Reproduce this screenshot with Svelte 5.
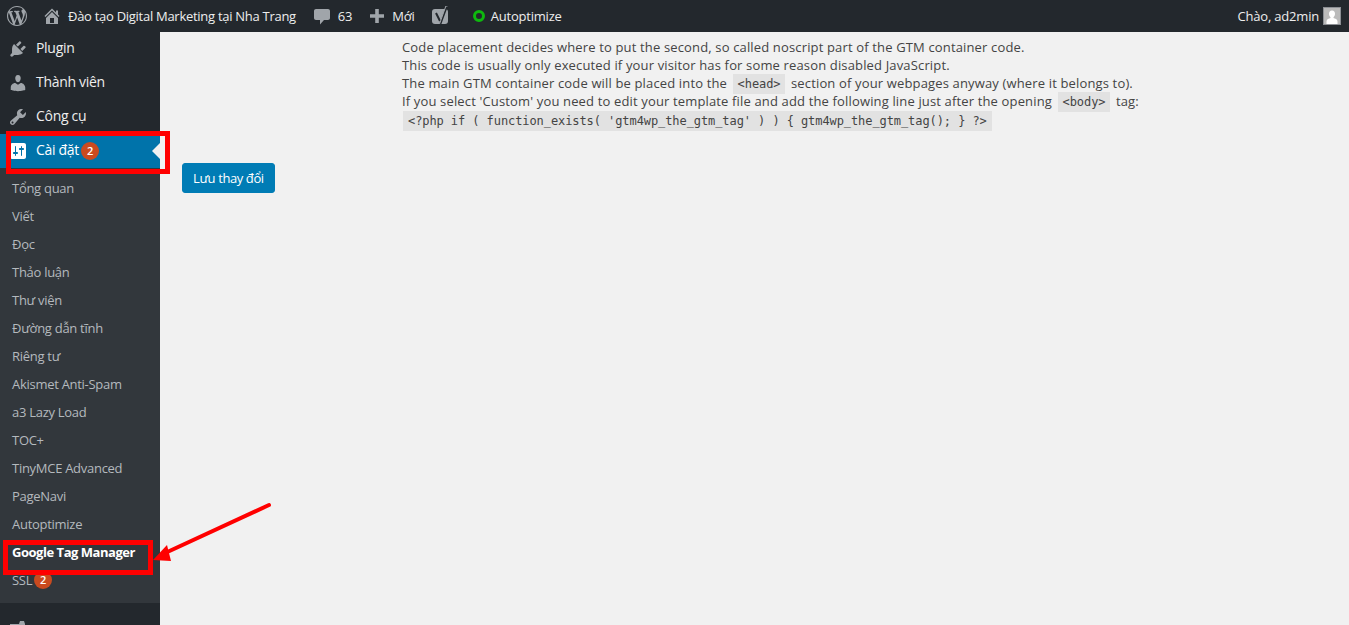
<script lang="ts">
  const settingsLinks = [
    { label: "Tổng quan" },
    { label: "Viết" },
    { label: "Đọc" },
    { label: "Thảo luận" },
    { label: "Thư viện" },
    { label: "Đường dẫn tĩnh" },
    { label: "Riêng tư" },
    { label: "Akismet Anti-Spam" },
    { label: "a3 Lazy Load" },
    { label: "TOC+" },
    { label: "TinyMCE Advanced" },
    { label: "PageNavi" },
    { label: "Autoptimize" },
    { label: "Google Tag Manager", current: true },
    { label: "SSL", badge: 2 },
  ];

  const mainLinks = [
    {
      label: "Plugin",
      icon: "M13.11 4.36L9.87 7.6 8 5.73l3.24-3.24c.35-.34 1.05-.2 1.56.32.52.51.66 1.21.31 1.55zm-8 1.77l.91-1.12 9.01 9.01-1.19.84c-.71.71-2.63 1.16-3.82 1.16H6.14L4.9 17.26c-.59.59-1.54.59-2.12 0-.59-.58-.59-1.53 0-2.12l1.24-1.24v-3.88c0-1.13.4-3.19 1.09-3.89zm7.26 3.97l3.24-3.24c.34-.35 1.04-.21 1.55.31.52.51.66 1.21.31 1.55l-3.24 3.25z",
    },
    {
      label: "Thành viên",
      icon: "M10 9.25c-2.27 0-2.73-3.44-2.73-3.44C7 4.02 7.82 2 9.97 2c2.16 0 2.98 2.02 2.71 3.81 0 0-.41 3.44-2.68 3.44zm0 2.57L12.72 10c2.39 0 4.52 2.33 4.52 4.53v2.49s-3.65 1.13-7.24 1.13c-3.65 0-7.24-1.13-7.24-1.13v-2.49c0-2.25 1.94-4.48 4.47-4.48z",
    },
    {
      label: "Công cụ",
      icon: "M16.68 9.77c-1.34 1.34-3.3 1.67-4.95.99l-5.41 6.52c-.99.99-2.59.99-3.58 0s-.99-2.59 0-3.57l6.52-5.42c-.68-1.65-.35-3.61.99-4.95 1.28-1.28 3.12-1.62 4.72-1.06l-2.89 2.89 2.82 2.82 2.86-2.87c.53 1.58.18 3.39-1.08 4.65zM3.81 16.21c.4.39 1.04.39 1.43 0 .4-.4.4-1.04 0-1.43-.39-.4-1.03-.4-1.43 0-.39.39-.39 1.03 0 1.43z",
    },
  ];

  const settingsIcon =
    "M18 16V4c0-1.1-.9-2-2-2H4c-1.1 0-2 .9-2 2v12c0 1.1.9 2 2 2h12c1.1 0 2-.9 2-2zM8 11h1c.55 0 1 .45 1 1s-.45 1-1 1H8v1.5c0 .28-.22.5-.5.5s-.5-.22-.5-.5V13H6c-.55 0-1-.45-1-1s.45-1 1-1h1V5.5c0-.28.22-.5.5-.5s.5.22.5.5V11zm5-2h-1c-.55 0-1-.45-1-1s.45-1 1-1h1V5.5c0-.28.22-.5.5-.5s.5.22.5.5V7h1c.55 0 1 .45 1 1s-.45 1-1 1h-1v5.5c0 .28-.22.5-.5.5s-.5-.22-.5-.5V9z";
</script>

<div class="page">
  <header class="adminbar">
    <div class="bar-left">
      <span class="bar-item wp">
        <svg viewBox="0 0 20 20" width="20" height="20"><path d="M20 10c0-5.51-4.49-10-10-10C4.48 0 0 4.49 0 10c0 5.52 4.48 10 10 10 5.51 0 10-4.48 10-10zM7.780 15.370L4.370 6.220c.55-.02 1.170-.08 1.170-.08.5-.06.44-1.130-.06-1.110 0 0-1.450.11-2.370.11-.18 0-.37 0-.58-.01C4.120 2.690 6.870 1.110 10 1.110c2.330 0 4.450.87 6.050 2.340-.68-.11-1.650.39-1.650 1.580 0 .74.45 1.360.9 2.100.35.61.55 1.360.55 2.460 0 1.490-1.400 5-1.400 5l-3.030-8.370c.54-.02.82-.17.82-.17.5-.05.44-1.250-.06-1.220 0 0-1.440.12-2.380.12-.87 0-2.330-.12-2.330-.12-.5-.03-.56 1.200-.06 1.220l.92.08 1.260 3.410zM17.410 10c.24-.64.74-1.870.43-4.250.7 1.290 1.050 2.710 1.050 4.250 0 3.290-1.730 6.240-4.400 7.780.97-2.590 1.940-5.200 2.920-7.780zM6.100 18.090C3.120 16.650 1.110 13.530 1.110 10c0-1.300.23-2.480.72-3.590C3.250 10.300 4.670 14.200 6.100 18.090zm4.030-6.630l2.580 6.980c-.86.29-1.760.45-2.710.45-.79 0-1.570-.11-2.290-.33.81-2.380 1.620-4.740 2.420-7.100z"/></svg>
      </span>
      <span class="bar-item site">
        <svg viewBox="0 0 20 20" width="20" height="20"><path d="M16 8.5l1.53 1.53-1.06 1.06L10 4.62l-6.47 6.47-1.06-1.06L10 2.5l4 4v-2h2v4zm-6-2.46l6 5.99V18H4v-5.97zM12 17v-5H8v5h4z"/></svg>
        Đào tạo Digital Marketing tại Nha Trang
      </span>
      <span class="bar-item comments">
        <svg viewBox="0 0 20 20" width="20" height="20"><path d="M4 3h12c1.100 0 2 .9 2 2v7c0 1.100-.9 2-2 2h-4l-4 4.500V14H4c-1.100 0-2-.9-2-2V5c0-1.100.9-2 2-2z"/></svg>
        63
      </span>
      <span class="bar-item new">
        <svg viewBox="0 0 20 20" width="20" height="20"><path d="M17 8.200v3.600h-5.200V17H8.200v-5.200H3V8.200h5.200V3h3.600v5.200H17z"/></svg>
        Mới
      </span>
      <span class="bar-item yoast">
        <svg viewBox="0 0 18 20" width="18" height="20">
          <rect x="0" y="3" width="16" height="15" rx="3"/>
          <path d="M4 7l4 8M15 0L8 19" fill="none" stroke="#23282d" stroke-width="2"/>
          <path d="M15.500 0l-1.600 0L7.500 18" fill="none" stroke="#a0a5aa" stroke-width="1"/>
        </svg>
      </span>
      <span class="bar-item ao">
        <span class="ao-dot"></span>
        Autoptimize
      </span>
    </div>
    <div class="bar-right">
      Chào, ad2min
      <span class="avatar">
        <svg viewBox="0 0 16 16" width="16" height="16"><rect width="16" height="16" fill="#bbb"/><path d="M8 2.500c2 0 3 1.400 3 3.300 0 1.500-.6 2.800-1.500 3.500v.7c1.500.4 4 1.200 4 3.500V16H2.500v-2.500c0-2.300 2.500-3.100 4-3.500v-.7C5.600 8.600 5 7.300 5 5.800c0-1.900 1-3.300 3-3.300z" fill="#fff"/></svg>
      </span>
    </div>
  </header>

  <div class="body">
    <nav class="sidebar">
      <ul class="menu">
        {#each mainLinks as link}
          <li class="menu-item">
            <svg viewBox="0 0 20 20" width="20" height="20"><path d={link.icon}/></svg>
            <span class="menu-label">{link.label}</span>
          </li>
        {/each}
        <li class="menu-item active">
          <svg viewBox="0 0 20 20" width="20" height="20"><path d={settingsIcon}/></svg>
          <span class="menu-label">Cài đặt</span>
          <span class="badge">2</span>
        </li>
      </ul>
      <ul class="submenu">
        {#each settingsLinks as link}
          <li class:current={link.current}>
            {link.label}
            {#if link.badge}<span class="badge">{link.badge}</span>{/if}
          </li>
        {/each}
      </ul>
      <div class="menu-item next">
        <svg viewBox="0 0 20 20" width="20" height="20"><path d="M2 7h9l1-3h4l1 3v10H2z"/></svg>
      </div>
    </nav>

    <main class="content">
      <div class="notes">
        <p>Code placement decides where to put the second, so called noscript part of the GTM container code.</p>
        <p>This code is usually only executed if your visitor has for some reason disabled JavaScript.</p>
        <p>The main GTM container code will be placed into the <code>&lt;head&gt;</code> section of your webpages anyway (where it belongs to).</p>
        <p>If you select 'Custom' you need to edit your template file and add the following line just after the opening <code>&lt;body&gt;</code> tag:</p>
        <p class="snippet"><code>&lt;?php if ( function_exists( 'gtm4wp_the_gtm_tag' ) ) &#123; gtm4wp_the_gtm_tag(); &#125; ?&gt;</code></p>
      </div>
      <button class="save" type="button">Lưu thay đổi</button>
    </main>
  </div>

  <!-- annotations drawn on top of the screenshot -->
  <div class="mark mark-settings"></div>
  <div class="mark mark-gtm"></div>
  <svg class="arrow" width="130" height="70" viewBox="0 0 130 70">
    <line x1="121" y1="5" x2="15" y2="54" stroke="#f00" stroke-width="4" stroke-linecap="round"/>
    <polygon points="5,60 19,45 23,61" fill="#f00"/>
  </svg>
</div>

<style>
  :global(body) {
    margin: 0;
    background: #f1f1f1;
  }

  .page {
    position: relative;
    height: 625px;
    overflow: hidden;
    font-family: "Open Sans", "Noto Sans", sans-serif;
    font-size: 13px;
    color: #444;
    background: #f1f1f1;
  }

  .adminbar {
    display: flex;
    justify-content: space-between;
    align-items: center;
    height: 32px;
    padding: 0 8px 0 7px;
    background: #23282d;
    color: #eee;
    letter-spacing: -0.2px;
  }

  .bar-left,
  .bar-right,
  .bar-item {
    display: flex;
    align-items: center;
  }

  .adminbar svg {
    fill: #a0a5aa;
  }

  .bar-item.wp {
    margin-right: 15px;
  }

  .site {
    letter-spacing: -0.28px;
  }

  .site svg {
    margin-right: 6px;
  }

  .comments {
    margin-left: 16px;
  }

  .comments svg {
    margin-right: 6px;
  }

  .new {
    margin-left: 15px;
  }

  .new svg {
    margin-right: 5px;
  }

  .yoast {
    margin-left: 17px;
  }

  .ao {
    margin-left: 23px;
  }

  .ao-dot {
    width: 6px;
    height: 6px;
    margin-right: 6px;
    border: 3px solid #0eb90e;
    border-radius: 50%;
  }

  .avatar {
    display: flex;
    margin-left: 4px;
    border: 1px solid #8c8f94;
  }

  .body {
    display: flex;
    height: 593px;
  }

  .sidebar {
    flex: 0 0 160px;
    background: #23282d;
    color: #eee;
  }

  .menu,
  .submenu {
    margin: 0;
    padding: 0;
    list-style: none;
  }

  .menu-item {
    position: relative;
    display: flex;
    align-items: center;
    height: 34px;
    padding-left: 8px;
    font-size: 14px;
    letter-spacing: -0.3px;
  }

  .menu-item svg {
    flex: none;
    margin-right: 8px;
    fill: #a0a5aa;
  }

  .menu-label {
    margin-bottom: 3px;
  }

  .menu-item.active {
    background: #0073aa;
    color: #fff;
  }

  .menu-item.active svg {
    fill: #fff;
  }

  .menu-item.active::after {
    content: "";
    position: absolute;
    right: 0;
    top: 9px;
    border: 8px solid transparent;
    border-right-color: #f1f1f1;
  }

  .badge {
    display: inline-block;
    flex: none;
    width: 18px;
    height: 18px;
    margin-left: 2px;
    border-radius: 50%;
    background: #ca4a1f;
    color: #fff;
    font-size: 11px;
    font-weight: 600;
    line-height: 18px;
    text-align: center;
    letter-spacing: 0;
  }

  .submenu {
    padding: 6px 0 9px;
    background: #32373c;
    color: #b4b9be;
  }

  .submenu li {
    display: flex;
    align-items: center;
    box-sizing: border-box;
    height: 28px;
    padding-left: 12px;
    letter-spacing: -0.28px;
  }

  .submenu li.current {
    color: #fff;
    font-weight: 700;
    letter-spacing: -0.47px;
  }

  .next {
    margin-top: 7px;
  }

  .content {
    flex: 1;
    padding: 6px 22px 0;
  }

  .notes {
    margin-left: 220px;
  }

  .notes p {
    height: 18px;
    margin: 0;
    line-height: 18px;
    white-space: nowrap;
    letter-spacing: 0.15px;
  }

  .notes p.snippet {
    margin-top: 1px;
  }

  .notes code {
    margin: 0 2px;
    padding: 3px 5px;
    background: #e2e2e2;
    font-family: "DejaVu Sans Mono", "Liberation Mono", monospace;
    font-size: 12px;
    letter-spacing: -0.08px;
  }

  .notes p.snippet code {
    margin: 0 1px;
  }

  .save {
    display: block;
    height: 30px;
    margin-top: 34px;
    padding: 0 10px;
    border: 1px solid #007cb5;
    border-radius: 3px;
    background: #007cb5;
    color: #fff;
    font: inherit;
    letter-spacing: -0.4px;
  }

  .mark {
    position: absolute;
    box-sizing: border-box;
    border: 5px solid #f00;
  }

  .mark-settings {
    left: 6px;
    top: 131px;
    width: 164px;
    height: 43px;
  }

  .mark-gtm {
    left: 3px;
    top: 540px;
    width: 150px;
    height: 35px;
  }

  .arrow {
    position: absolute;
    left: 148px;
    top: 500px;
  }
</style>
